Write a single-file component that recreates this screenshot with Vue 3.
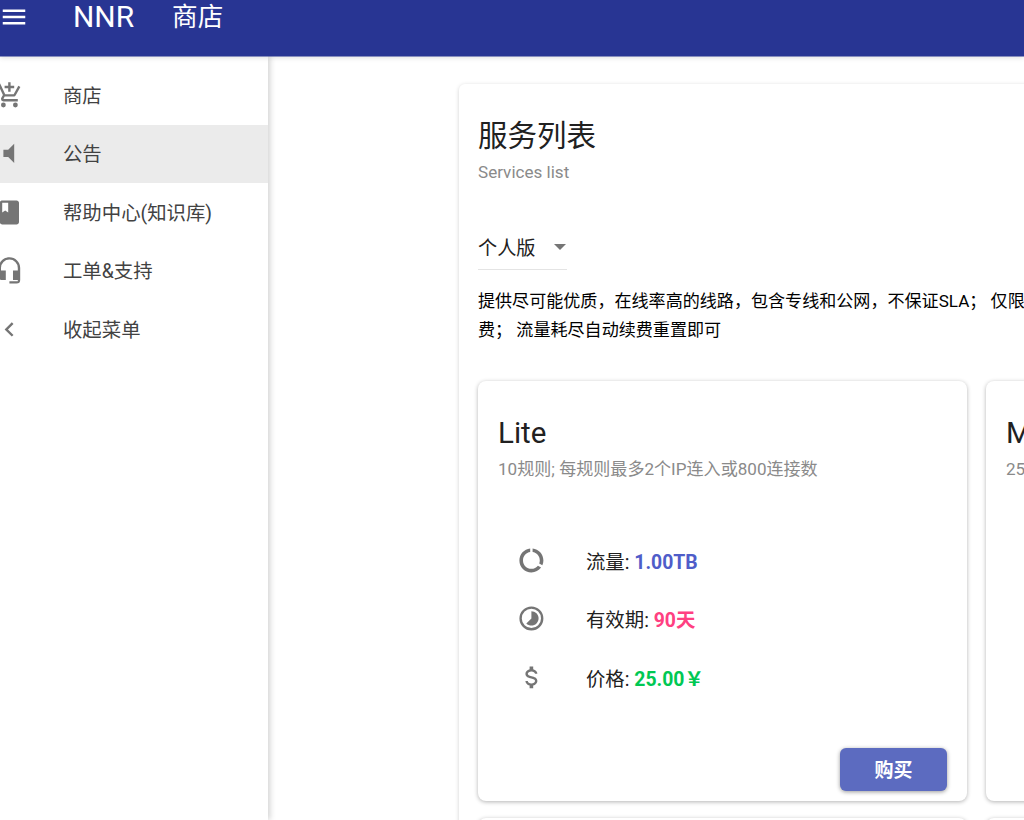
<template>
  <div class="page">
    <header class="topbar">
      <svg class="menu-btn" viewBox="0 0 24 24"><path d="M3 18h18v-2H3v2zm0-5h18v-2H3v2zm0-7v2h18V6H3z" /></svg>
      <span class="brand">NNR</span>
      <span class="page-name">商店</span>
    </header>

    <div class="body">
      <aside class="drawer">
        <div
          v-for="item in menu"
          :key="item.label"
          :class="['menu-item', { active: item.active }]"
        >
          <svg class="menu-icon" viewBox="0 0 24 24"><path :d="item.icon" /></svg>
          <span class="menu-label">{{ item.label }}</span>
        </div>
      </aside>

      <main class="content">
        <section class="panel">
          <h1 class="panel-title">服务列表</h1>
          <p class="panel-sub">Services list</p>

          <div class="select">
            <span>个人版</span>
            <i class="caret"></i>
          </div>

          <p class="desc">提供尽可能优质，在线率高的线路，包含专线和公网，不保证SLA； 仅限<br>费； 流量耗尽自动续费重置即可</p>

          <div class="cards">
            <div class="plan">
              <h2 class="plan-name">Lite</h2>
              <p class="plan-sub">10规则; 每规则最多2个IP连入或800连接数</p>
              <ul class="specs">
                <li>
                  <svg class="spec-icon" viewBox="0 0 24 24"><path d="M13 2.05v3.03c3.39.49 6 3.39 6 6.92 0 .9-.18 1.75-.48 2.54l2.6 1.53c.56-1.24.88-2.62.88-4.07 0-5.18-3.95-9.45-9-9.95zM12 19c-3.87 0-7-3.13-7-7 0-3.53 2.61-6.43 6-6.92V2.05C5.94 2.55 2 6.81 2 12c0 5.52 4.47 10 9.99 10 3.31 0 6.24-1.61 8.06-4.09l-2.6-1.53C16.17 17.98 14.21 19 12 19z" /></svg>
                  <span>流量: <b class="blue">1.00TB</b></span>
                </li>
                <li>
                  <svg class="spec-icon" viewBox="0 0 24 24"><path d="M16.24,7.76C15.07,6.59 13.54,6 12,6V12L7.76,16.24C10.1,18.58 13.9,18.58 16.25,16.24C18.59,13.9 18.59,10.1 16.24,7.76M12,2A10,10 0 0,0 2,12A10,10 0 0,0 12,22A10,10 0 0,0 22,12A10,10 0 0,0 12,2M12,20A8,8 0 0,1 4,12A8,8 0 0,1 12,4A8,8 0 0,1 20,12A8,8 0 0,1 12,20Z" /></svg>
                  <span>有效期: <b class="pink">90天</b></span>
                </li>
                <li>
                  <svg class="spec-icon" viewBox="0 0 24 24"><path d="M7,15H9C9,16.08 10.37,17 12,17C13.63,17 15,16.08 15,15C15,13.9 13.96,13.5 11.76,12.97C9.64,12.44 7,11.78 7,9C7,7.21 8.47,5.69 10.5,5.18V3H13.5V5.18C15.53,5.69 17,7.21 17,9H15C15,7.92 13.63,7 12,7C10.37,7 9,7.92 9,9C9,10.1 10.04,10.5 12.24,11.03C14.36,11.56 17,12.22 17,15C17,16.79 15.53,18.31 13.5,18.82V21H10.5V18.82C8.47,18.31 7,16.79 7,15Z" /></svg>
                  <span>价格: <b class="green">25.00￥</b></span>
                </li>
              </ul>
              <div class="plan-foot">
                <button type="button" class="buy">购买</button>
              </div>
            </div>

            <div class="plan">
              <h2 class="plan-name">M</h2>
              <p class="plan-sub">25</p>
            </div>

            <div class="plan"></div>
            <div class="plan"></div>
          </div>
        </section>
      </main>
    </div>
  </div>
</template>

<script setup>
const menu = [
  { label: '商店', icon: 'M11,9H13V6H16V4H13V1H11V4H8V6H11M7,18A2,2 0 0,0 5,20A2,2 0 0,0 7,22A2,2 0 0,0 9,20A2,2 0 0,0 7,18M17,18A2,2 0 0,0 15,20A2,2 0 0,0 17,22A2,2 0 0,0 19,20A2,2 0 0,0 17,18M7.17,14.75L7.2,14.63L8.1,13H15.55C16.3,13 16.96,12.59 17.3,11.97L21.16,4.96L19.42,4H19.41L18.31,6L15.55,11H8.53L8.4,10.74L6.16,6L5.21,4L4.27,2H1V4H3L6.6,11.59L5.25,14.04C5.09,14.32 5,14.65 5,15A2,2 0 0,0 7,17H19V15H7.42C7.29,15 7.17,14.89 7.17,14.75Z' },
  { label: '公告', active: true, icon: 'M7,9V15H11L16,20V4L11,9H7Z' },
  { label: '帮助中心(知识库)', icon: 'M18 2H6c-1.1 0-2 .9-2 2v16c0 1.1.9 2 2 2h12c1.1 0 2-.9 2-2V4c0-1.1-.9-2-2-2zM6 4h5v8l-2.5-1.5L6 12V4z' },
  { label: '工单&支持', icon: 'M12,1C7,1 3,5 3,10V17A3,3 0 0,0 6,20H9V12H5V10A7,7 0 0,1 12,3A7,7 0 0,1 19,10V12H15V20H19V21H12V23H18A3,3 0 0,0 21,20V10C21,5 17,1 12,1Z' },
  { label: '收起菜单', icon: 'M15.41,16.58L10.83,12L15.41,7.41L14,6L8,12L14,18L15.41,16.58Z' },
]
</script>

<style>
html, body {
  margin: 0;
  overflow: hidden;
}
</style>

<style scoped>
.page {
  width: 1024px;
  height: 820px;
  overflow: hidden;
  background: #fff;
  color: #212121;
  font-family: Roboto, "Noto Sans CJK SC", sans-serif;
}

.topbar {
  height: 56px;
  box-sizing: border-box;
  padding-bottom: 22px;
  display: flex;
  align-items: center;
  background: #283593;
  color: #fff;
  position: relative;
  z-index: 2;
  box-shadow: 0 1px 0 rgba(40, 53, 147, .5), 0 2px 5px rgba(0, 0, 0, .12);
}

.menu-btn {
  width: 30px;
  height: 30px;
  margin-left: -1px;
  flex: none;
  fill: #fff;
}

.brand {
  margin-left: 44px;
  font-size: 29.9px;
  line-height: 34px;
}

.page-name {
  margin-left: 38px;
  font-size: 25.6px;
  line-height: 34px;
}

.body {
  display: flex;
  height: 764px;
}

.drawer {
  width: 268px;
  flex: none;
  padding-top: 10px;
  box-sizing: border-box;
  background: #fff;
  box-shadow: 2px 0 6px rgba(0, 0, 0, .18);
  position: relative;
  z-index: 1;
}

.menu-item {
  height: 58.5px;
  display: flex;
  align-items: center;
  font-size: 19.4px;
  color: #424242;
}

.menu-item.active {
  background: #ebebeb;
}

.menu-label {
  margin-bottom: 2px;
}

.menu-icon {
  width: 28.8px;
  height: 28.8px;
  flex: none;
  margin-left: -5.5px;
  margin-right: 39.7px;
  fill: #757575;
}

.content {
  flex: 1;
  min-width: 0;
  padding: 28px 0 0 191px;
  background: #fff;
}

.panel {
  width: 1035px;
  box-sizing: border-box;
  padding: 32px 19px 0;
  border-radius: 6px;
  background: #fff;
  box-shadow: 0 1px 4px rgba(0, 0, 0, .18);
}

.panel-title {
  margin: 0;
  font-size: 29.5px;
  line-height: 40px;
  font-weight: 400;
}

.panel-sub {
  margin: 6px 0 0;
  font-size: 17.07px;
  line-height: 20px;
  color: #8a8a8a;
}

.select {
  width: 89px;
  height: 45px;
  margin-top: 43px;
  padding: 0 1px 1px 0;
  box-sizing: border-box;
  display: flex;
  align-items: center;
  justify-content: space-between;
  border-bottom: 1px solid #e4e4e4;
  font-size: 19.2px;
}

.caret {
  width: 0;
  height: 0;
  border-left: 6px solid transparent;
  border-right: 6px solid transparent;
  border-top: 6px solid #757575;
}

.desc {
  margin: 17px 0 0;
  font-size: 17.07px;
  line-height: 29px;
  color: #000;
  white-space: nowrap;
}

.cards {
  display: grid;
  grid-template-columns: 489px 489px;
  gap: 17px 19px;
  margin-top: 36px;
}

.plan {
  height: 420px;
  box-sizing: border-box;
  padding: 32px 20px 0;
  border-radius: 8px;
  background: #fff;
  box-shadow: 0 1px 4px rgba(0, 0, 0, .3);
  display: flex;
  flex-direction: column;
}

.plan-name {
  margin: 0;
  font-size: 29.5px;
  line-height: 40px;
  font-weight: 400;
}

.plan-sub {
  margin: 6px 0 0;
  font-size: 17.07px;
  line-height: 20px;
  color: #8a8a8a;
}

.specs {
  list-style: none;
  margin: 52px 0 0;
  padding: 0;
}

.specs li {
  height: 58.5px;
  display: flex;
  align-items: center;
  font-size: 19.4px;
}

.specs b {
  font-weight: 700;
}

.spec-icon {
  width: 28.8px;
  height: 28.8px;
  flex: none;
  margin-left: 19px;
  margin-right: 40.2px;
  fill: #757575;
}

.blue { color: #4f5dc9; }
.pink { color: #ff4081; }
.green { color: #00c853; }

.plan-foot {
  margin-top: auto;
  padding-bottom: 10px;
  display: flex;
  justify-content: flex-end;
}

.buy {
  width: 107px;
  height: 43px;
  padding: 0 0 3px;
  border: 0;
  border-radius: 6px;
  background: #5c6bc0;
  color: #fff;
  font: 700 19px Roboto, "Noto Sans CJK SC", sans-serif;
  box-shadow: 0 1px 4px rgba(0, 0, 0, .4);
}
</style>
